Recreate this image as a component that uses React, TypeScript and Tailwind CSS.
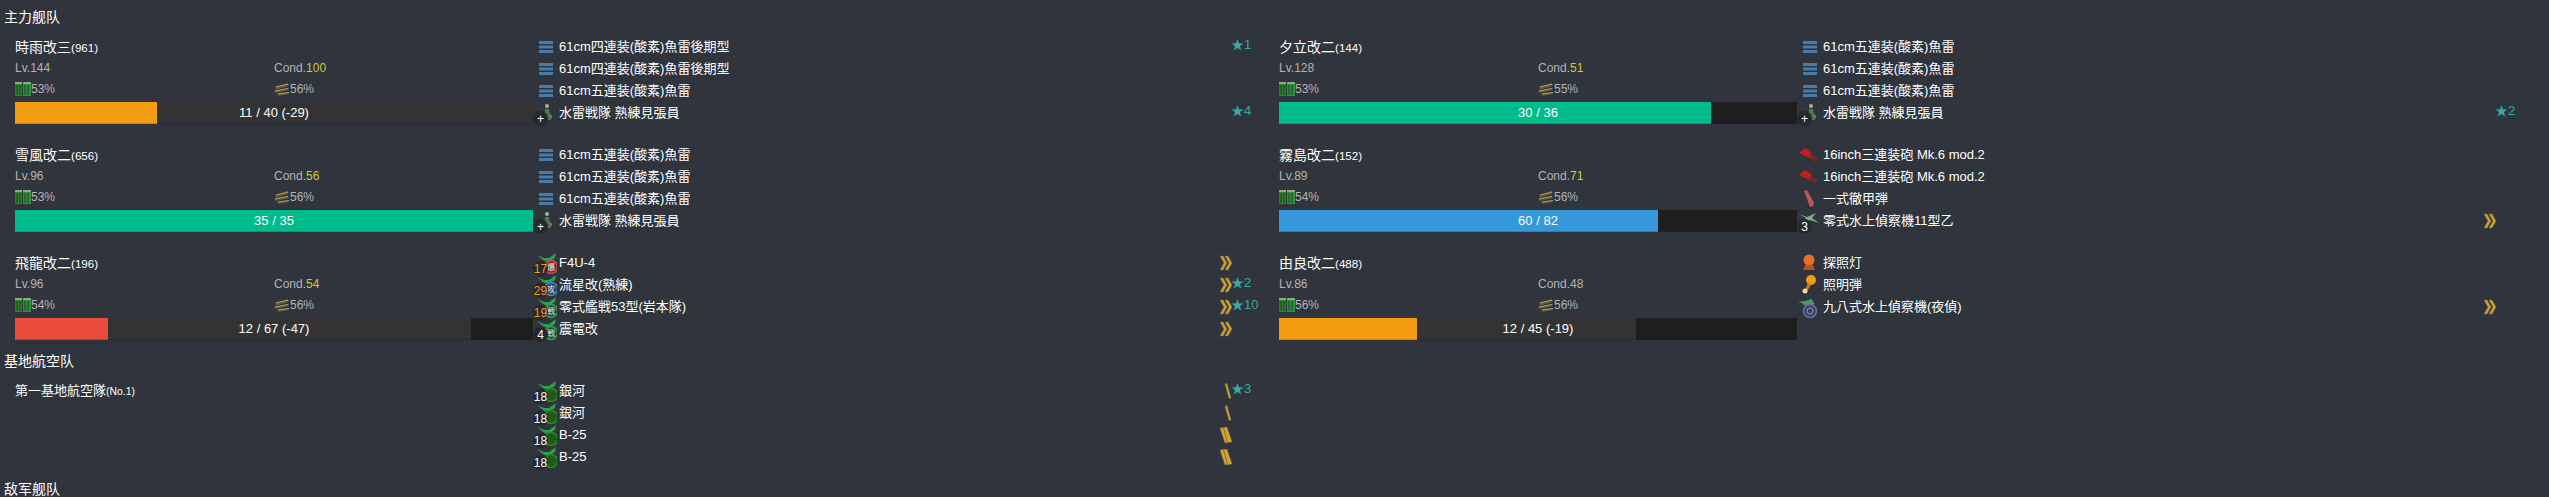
import type { ReactNode } from 'react';

type IconKind =
  | 'torpedo' | 'lookout' | 'gun' | 'shell' | 'seaplane' | 'light' | 'flare' | 'nightPlane'
  | 'bomber' | 'attacker' | 'fighter' | 'land';

type Equip = {
  icon: IconKind;
  name: string;
  badge?: string;
  badgeHot?: boolean;
  rank?: 'chevron' | 'slash' | 'stripes';
  star?: number;
};

type Ship = {
  name: string;
  id: number;
  lv: number;
  cond: number;
  condHigh: boolean;
  fuel: number;
  ammo: number;
  hp: number;
  maxHp: number;
  lost?: number;
  barColor: string;
  equips: Equip[];
};

const quad: Equip = { icon: 'torpedo', name: '61cm四連装(酸素)魚雷後期型' };
const quint: Equip = { icon: 'torpedo', name: '61cm五連装(酸素)魚雷' };
const lookout: Equip = { icon: 'lookout', name: '水雷戦隊 熟練見張員', badge: '+' };

const ships: Ship[] = [
  {
    name: '時雨改三', id: 961, lv: 144, cond: 100, condHigh: true, fuel: 53, ammo: 56,
    hp: 11, maxHp: 40, lost: 29, barColor: 'bg-[#f39c12]',
    equips: [{ ...quad, star: 1 }, quad, quint, { ...lookout, star: 4 }],
  },
  {
    name: '夕立改二', id: 144, lv: 128, cond: 51, condHigh: true, fuel: 53, ammo: 55,
    hp: 30, maxHp: 36, barColor: 'bg-[#00bc8c]',
    equips: [quint, quint, quint, { ...lookout, star: 2 }],
  },
  {
    name: '雪風改二', id: 656, lv: 96, cond: 56, condHigh: true, fuel: 53, ammo: 56,
    hp: 35, maxHp: 35, barColor: 'bg-[#00bc8c]',
    equips: [quint, quint, quint, lookout],
  },
  {
    name: '霧島改二', id: 152, lv: 89, cond: 71, condHigh: true, fuel: 54, ammo: 56,
    hp: 60, maxHp: 82, barColor: 'bg-[#3498db]',
    equips: [
      { icon: 'gun', name: '16inch三連装砲 Mk.6 mod.2' },
      { icon: 'gun', name: '16inch三連装砲 Mk.6 mod.2' },
      { icon: 'shell', name: '一式徹甲弾' },
      { icon: 'seaplane', name: '零式水上偵察機11型乙', badge: '3', rank: 'chevron' },
    ],
  },
  {
    name: '飛龍改二', id: 196, lv: 96, cond: 54, condHigh: true, fuel: 54, ammo: 56,
    hp: 12, maxHp: 67, lost: 47, barColor: 'bg-[#e74c3c]',
    equips: [
      { icon: 'bomber', name: 'F4U-4', badge: '17', badgeHot: true, rank: 'chevron' },
      { icon: 'attacker', name: '流星改(熟練)', badge: '29', badgeHot: true, rank: 'chevron', star: 2 },
      { icon: 'fighter', name: '零式艦戦53型(岩本隊)', badge: '19', badgeHot: true, rank: 'chevron', star: 10 },
      { icon: 'fighter', name: '震電改', badge: '4', rank: 'chevron' },
    ],
  },
  {
    name: '由良改二', id: 488, lv: 86, cond: 48, condHigh: false, fuel: 56, ammo: 56,
    hp: 12, maxHp: 45, lost: 19, barColor: 'bg-[#f39c12]',
    equips: [
      { icon: 'light', name: '探照灯' },
      { icon: 'flare', name: '照明弾' },
      { icon: 'nightPlane', name: '九八式水上偵察機(夜偵)', rank: 'chevron' },
    ],
  },
];

const airEquips: Equip[] = [
  { icon: 'land', name: '銀河', badge: '18', rank: 'slash', star: 3 },
  { icon: 'land', name: '銀河', badge: '18', rank: 'slash' },
  { icon: 'land', name: 'B-25', badge: '18', rank: 'stripes' },
  { icon: 'land', name: 'B-25', badge: '18', rank: 'stripes' },
];

function PlaneIcon({ ring, fill, label }: { ring: string; fill: string; label?: string }) {
  return (
    <svg width="24" height="26" viewBox="0 0 24 26" className="block">
      <path d="M4 3l7 3 5 0 7-5-1 5-5 3-5 0-2-1z" fill="#2fa04f" />
      <circle cx="18" cy="15" r="6.500" fill={fill} stroke={ring} strokeWidth="1.500" />
      {label && (
        <text x="18" y="18" textAnchor="middle" fontSize="8" fill="#dfe6e9">
          {label}
        </text>
      )}
    </svg>
  );
}

function EquipGlyph({ kind }: { kind: IconKind }) {
  switch (kind) {
    case 'torpedo':
      return (
        <svg width="24" height="22" viewBox="0 0 24 22" className="block">
          <path d="M6 5h14v3H6zM6 9.500h14v3H6zM6 14h14v3H6z" fill="#4a7ba6" />
        </svg>
      );
    case 'lookout':
      return (
        <svg width="24" height="22" viewBox="0 0 24 22" className="block">
          <circle cx="14" cy="4" r="2" fill="#9fb58a" />
          <path d="M12 7h4l1 6 1 5h-6z" fill="#4f7a4a" />
          <path d="M17 12l2 2-1 3z" fill="#8aa878" />
        </svg>
      );
    case 'gun':
      return (
        <svg width="24" height="22" viewBox="0 0 24 22" className="block">
          <path d="M2 9l6-5 6 4 3 5-5 1-4-2z" fill="#c01f1f" />
          <path d="M13 9l8 5-2 4-7-4z" fill="#6d2a30" />
        </svg>
      );
    case 'shell':
      return (
        <svg width="24" height="22" viewBox="0 0 24 22" className="block">
          <path d="M7 3l3-1 7 13-1 3-3 1z" fill="#b9585a" />
        </svg>
      );
    case 'seaplane':
      return (
        <svg width="24" height="22" viewBox="0 0 24 22" className="block">
          <path d="M2 4l8 3 9-4-4 5 7 5-9-3-7 3 3-5z" fill="#7fae85" />
        </svg>
      );
    case 'light':
      return (
        <svg width="24" height="22" viewBox="0 0 24 22" className="block">
          <circle cx="12" cy="8" r="5.500" fill="#e8702a" />
          <path d="M8 13h8l2 5H6z" fill="#b9521c" />
        </svg>
      );
    case 'flare':
      return (
        <svg width="24" height="22" viewBox="0 0 24 22" className="block">
          <circle cx="14" cy="6" r="5" fill="#f39c12" />
          <path d="M11 9l3 2-4 6-2-1z" fill="#c97d10" />
          <circle cx="8" cy="17" r="2.500" fill="#f5d9a0" />
        </svg>
      );
    case 'nightPlane':
      return (
        <svg width="24" height="26" viewBox="0 0 24 26" className="block">
          <path d="M1 6l7-1 7-2 1 3 2 2-6 2-5-1-2-2z" fill="#4f9a62" />
          <circle cx="13" cy="15" r="6.500" fill="#3d4260" stroke="#6b6aa8" strokeWidth="1.500" />
          <circle cx="13" cy="15" r="3" fill="none" stroke="#8f8ec0" strokeWidth="1" />
        </svg>
      );
    case 'bomber':
      return <PlaneIcon ring="#c44f52" fill="#7a3038" label="爆" />;
    case 'attacker':
      return <PlaneIcon ring="#3f83c4" fill="#2b4a6b" label="攻" />;
    case 'fighter':
      return <PlaneIcon ring="#34a050" fill="#24503a" label="戦" />;
    case 'land':
      return <PlaneIcon ring="#2c8a1c" fill="#1f5a1a" />;
  }
}

function RankIcon({ rank }: { rank: NonNullable<Equip['rank']> }) {
  if (rank === 'chevron') {
    return (
      <svg width="12" height="16" viewBox="0 0 12 16" className="block">
        <path
          d="M0 1h3l4 7-4 7H0l4-7zM5 1h3l4 7-4 7H5l4-7z"
          fill="#cfa52f"
          stroke="#77735a"
          strokeWidth="0.500"
        />
      </svg>
    );
  }
  if (rank === 'slash') {
    return (
      <svg width="12" height="16" viewBox="0 0 12 16" className="block">
        <path d="M5 1l2-.5 4 14.500-2 .500z" fill="#cfa52f" stroke="#77735a" strokeWidth="0.500" />
      </svg>
    );
  }
  return (
    <svg width="12" height="16" viewBox="0 0 12 16" className="block">
      <path d="M0 1l7-1 5 15-7 1z" fill="#cfa52f" stroke="#77735a" strokeWidth="0.500" />
      <path d="M3.500 1l4 14" stroke="#8a7230" strokeWidth="1" />
    </svg>
  );
}

function EquipRow({ equip }: { equip: Equip }) {
  return (
    <div className="flex h-[22px] items-center">
      <div className="relative h-[22px] w-[26px] shrink-0">
        <EquipGlyph kind={equip.icon} />
        {equip.badge && (
          <span
            className={`absolute bottom-[-2px] left-0 flex h-[15px] w-[15px] items-center justify-center rounded-full bg-[#26282e] text-xs ${
              equip.badgeHot ? 'text-[#f39c12]' : 'text-white'
            }`}
          >
            {equip.badge}
          </span>
        )}
      </div>
      <div className="w-[661px] shrink-0 text-[13px] text-white">{equip.name}</div>
      <div className="w-[11px] shrink-0">{equip.rank && <RankIcon rank={equip.rank} />}</div>
      {equip.star !== undefined && (
        <div className="mb-1 whitespace-nowrap text-[13px] text-[#3aa8a4]">★{equip.star}</div>
      )}
    </div>
  );
}

function HpBar({ ship }: { ship: Ship }) {
  const hpPct = (ship.hp / ship.maxHp) * 100;
  const lostPct = ((ship.lost ?? 0) / ship.maxHp) * 100;
  return (
    <div className="relative mt-[3px] flex h-[22px] bg-[#1e1e1e] text-[13px] leading-[22px] text-white">
      <div
        className={`${ship.barColor} shadow-[inset_0_-1px_0_rgba(0,0,0,0.15)]`}
        style={{ width: `${hpPct}%` }}
      />
      <div
        className="bg-[#333333] shadow-[inset_0_-1px_0_rgba(0,0,0,0.15)]"
        style={{ width: `${lostPct}%` }}
      />
      <span className="absolute inset-0 text-center">
        {ship.hp} / {ship.maxHp}
        {ship.lost ? ` (-${ship.lost})` : ''}
      </span>
    </div>
  );
}

function ShipCard({ ship }: { ship: Ship }) {
  return (
    <div className="flex">
      <div className="w-[518px] shrink-0">
        <div className="h-[22px] text-sm leading-[22px] text-white">
          {ship.name}
          <small className="text-[11.6px]">({ship.id})</small>
        </div>
        <div className="grid h-[20px] grid-cols-2 items-center text-xs text-[#b4b4b4]">
          <div>Lv.{ship.lv}</div>
          <div>
            Cond.
            <span className={ship.condHigh ? 'text-[#cccc33]' : ''}>{ship.cond}</span>
          </div>
        </div>
        <div className="grid h-[21px] grid-cols-2 items-center text-xs text-[#b4b4b4]">
          <div className="flex items-center">
            <svg width="16" height="14" viewBox="0 0 16 14" className="block">
              <path d="M0 2h7v12H0z" fill="#2f7d2f" />
              <path d="M8 2h8v12H8z" fill="#2f8f3a" />
              <path d="M0 0h7v2H0zM8 0h8v2H8z" fill="#8fa88f" />
              <path d="M2 3v10M5 3v10M10 3v10M13 3v10" stroke="#154a18" strokeWidth="1" />
            </svg>
            {ship.fuel}%
          </div>
          <div className="flex items-center">
            <svg width="16" height="14" viewBox="0 0 16 14" className="block">
              <path d="M1 5l13-4 1 3L2 8zM0 9l14-3 1 2-13 3zM3 12l12-2 0 2-10 2z" fill="#5f5436" />
              <path d="M2 5l12-3M1 9l13-2.500M4 12l11-1.500" stroke="#b3a373" strokeWidth="1" />
            </svg>
            {ship.ammo}%
          </div>
        </div>
        <HpBar ship={ship} />
      </div>
      <div className="w-[746px] shrink-0">
        {ship.equips.map((eq, i) => (
          <EquipRow key={i} equip={eq} />
        ))}
      </div>
    </div>
  );
}

function SectionTitle({ children }: { children: ReactNode }) {
  return <div className="mb-2 h-[22px] pl-1 text-sm leading-[22px] text-white">{children}</div>;
}

export default function App() {
  return (
    <div className="h-screen overflow-hidden bg-[#2f343d] pt-[6px] font-['Liberation_Sans','Noto_Sans_CJK_JP',sans-serif]">
      <SectionTitle>主力舰队</SectionTitle>
      <div className="mb-[10px] grid grid-cols-[1264px_1264px] gap-y-5 pl-[15px]">
        {ships.map((s) => (
          <ShipCard key={s.id} ship={s} />
        ))}
      </div>

      <SectionTitle>基地航空队</SectionTitle>
      <div className="mb-[10px] flex pl-[15px]">
        <div className="w-[518px] shrink-0 text-[13px] leading-[22px] text-white">
          第一基地航空隊<small className="text-[10.4px]">(No.1)</small>
        </div>
        <div className="w-[746px] shrink-0">
          {airEquips.map((eq, i) => (
            <EquipRow key={i} equip={eq} />
          ))}
        </div>
      </div>

      <SectionTitle>敌军舰队</SectionTitle>
    </div>
  );
}
